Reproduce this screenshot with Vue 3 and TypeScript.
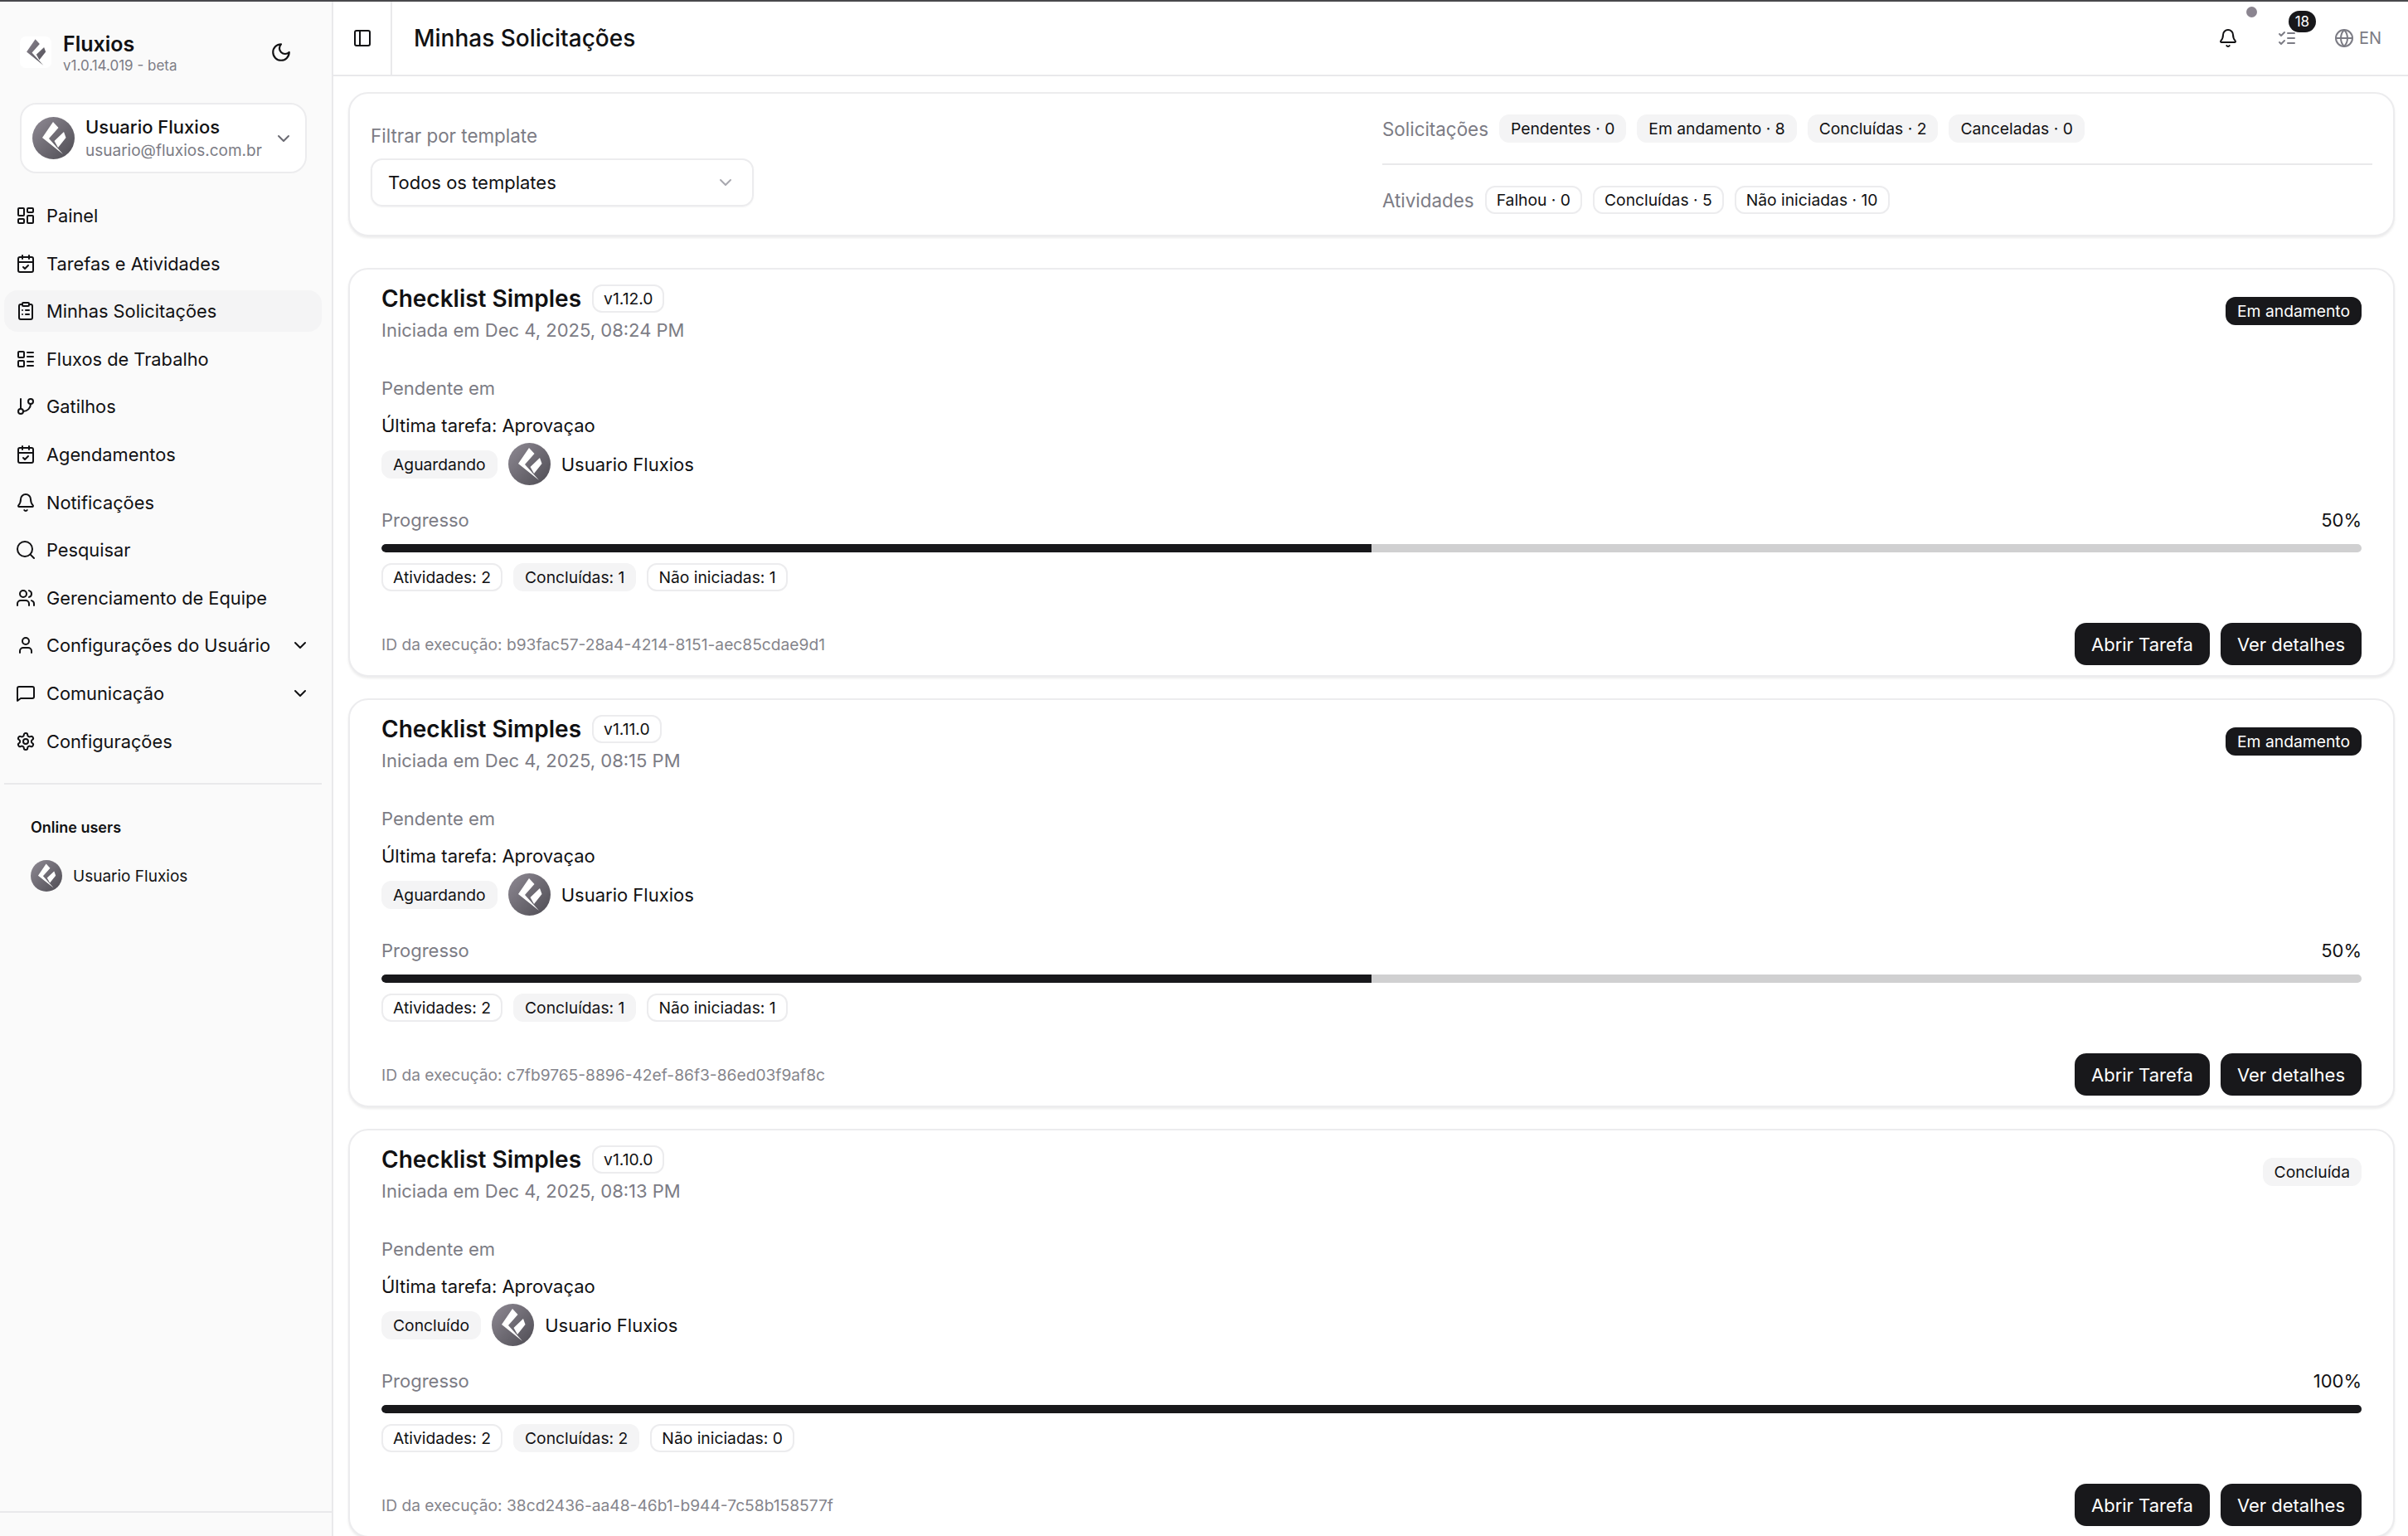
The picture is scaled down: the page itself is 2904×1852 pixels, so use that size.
<script setup lang="ts">
import { computed } from "vue";

// lucide-like icons, all on a 24 box
const icons: Record<string, string[]> = {
  dashboard: [
    "M4 3h5a1 1 0 0 1 1 1v7a1 1 0 0 1-1 1H4a1 1 0 0 1-1-1V4a1 1 0 0 1 1-1z",
    "M15 3h5a1 1 0 0 1 1 1v3a1 1 0 0 1-1 1h-5a1 1 0 0 1-1-1V4a1 1 0 0 1 1-1z",
    "M15 12h5a1 1 0 0 1 1 1v7a1 1 0 0 1-1 1h-5a1 1 0 0 1-1-1v-7a1 1 0 0 1 1-1z",
    "M4 16h5a1 1 0 0 1 1 1v3a1 1 0 0 1-1 1H4a1 1 0 0 1-1-1v-3a1 1 0 0 1 1-1z",
  ],
  calendar: [
    "M8 2v4",
    "M16 2v4",
    "M3 10h18",
    "M5 4h14a2 2 0 0 1 2 2v14a2 2 0 0 1-2 2H5a2 2 0 0 1-2-2V6a2 2 0 0 1 2-2z",
    "m9 16 2 2 4-4",
  ],
  clipboard: [
    "M9 2h6a1 1 0 0 1 1 1v2a1 1 0 0 1-1 1H9a1 1 0 0 1-1-1V3a1 1 0 0 1 1-1z",
    "M16 4h2a2 2 0 0 1 2 2v14a2 2 0 0 1-2 2H6a2 2 0 0 1-2-2V6a2 2 0 0 1 2-2h2",
    "M12 11h4",
    "M12 16h4",
    "M8 11h.01",
    "M8 16h.01",
  ],
  flows: [
    "M4 3h5a1 1 0 0 1 1 1v5a1 1 0 0 1-1 1H4a1 1 0 0 1-1-1V4a1 1 0 0 1 1-1z",
    "M4 14h5a1 1 0 0 1 1 1v5a1 1 0 0 1-1 1H4a1 1 0 0 1-1-1v-5a1 1 0 0 1 1-1z",
    "M14 4h7",
    "M14 9h7",
    "M14 15h7",
    "M14 20h7",
  ],
  branch: [
    "M6 3v12",
    "M15 6a3 3 0 1 0 6 0a3 3 0 1 0-6 0",
    "M3 18a3 3 0 1 0 6 0a3 3 0 1 0-6 0",
    "M18 9a9 9 0 0 1-9 9",
  ],
  bell: [
    "M10.268 21a2 2 0 0 0 3.464 0",
    "M3.262 15.326A1 1 0 0 0 4 17h16a1 1 0 0 0 .74-1.673C19.41 13.956 18 12.499 18 8A6 6 0 0 0 6 8c0 4.499-1.411 5.956-2.738 7.326",
  ],
  search: ["M2 11a9 9 0 1 0 18 0a9 9 0 1 0-18 0", "m22 22-4.6-4.6"],
  users: [
    "M16 21v-2a4 4 0 0 0-4-4H6a4 4 0 0 0-4 4v2",
    "M5 7a4 4 0 1 0 8 0a4 4 0 1 0-8 0",
    "M22 21v-2a4 4 0 0 0-3-3.87",
    "M16 3.13a4 4 0 0 1 0 7.75",
  ],
  user: ["M19 21v-2a4 4 0 0 0-4-4H9a4 4 0 0 0-4 4v2", "M8 7a4 4 0 1 0 8 0a4 4 0 1 0-8 0"],
  message: ["M22 16a2 2 0 0 1-2 2H6l-4 3V6a2 2 0 0 1 2-2h16a2 2 0 0 1 2 2z"],
  settings: [
    "M12.22 2h-.44a2 2 0 0 0-2 2v.18a2 2 0 0 1-1 1.73l-.43.25a2 2 0 0 1-2 0l-.15-.08a2 2 0 0 0-2.73.73l-.22.38a2 2 0 0 0 .73 2.73l.15.1a2 2 0 0 1 1 1.72v.51a2 2 0 0 1-1 1.74l-.15.09a2 2 0 0 0-.73 2.73l.22.38a2 2 0 0 0 2.73.73l.15-.08a2 2 0 0 1 2 0l.43.25a2 2 0 0 1 1 1.73V20a2 2 0 0 0 2 2h.44a2 2 0 0 0 2-2v-.18a2 2 0 0 1 1-1.73l.43-.25a2 2 0 0 1 2 0l.15.08a2 2 0 0 0 2.73-.73l.22-.39a2 2 0 0 0-.73-2.73l-.15-.08a2 2 0 0 1-1-1.74v-.5a2 2 0 0 1 1-1.74l.15-.09a2 2 0 0 0 .73-2.73l-.22-.38a2 2 0 0 0-2.73-.73l-.15.08a2 2 0 0 1-2 0l-.43-.25a2 2 0 0 1-1-1.73V4a2 2 0 0 0-2-2z",
    "M9 12a3 3 0 1 0 6 0a3 3 0 1 0-6 0",
  ],
  moon: ["M12 3a6 6 0 0 0 9 9 9 9 0 1 1-9-9Z"],
  chevron: ["m6 9 6 6 6-6"],
  panel: ["M5 3h14a2 2 0 0 1 2 2v14a2 2 0 0 1-2 2H5a2 2 0 0 1-2-2V5a2 2 0 0 1 2-2z", "M9 3v18"],
  checks: ["m3 17 2 2 4-4", "m3 7 2 2 4-4", "M13 6h8", "M13 12h8", "M13 18h8"],
  globe: [
    "M2 12a10 10 0 1 0 20 0a10 10 0 1 0-20 0",
    "M12 2a14.5 14.5 0 0 0 0 20 14.5 14.5 0 0 0 0-20",
    "M2 12h20",
  ],
};

const logo = "M25 6 31.5 13 20 26 37 45 12 25z M38 18 40.5 25 31 37 26.5 29z";

const nav = [
  { label: "Painel", icon: "dashboard" },
  { label: "Tarefas e Atividades", icon: "calendar" },
  { label: "Minhas Solicitações", icon: "clipboard", active: true },
  { label: "Fluxos de Trabalho", icon: "flows" },
  { label: "Gatilhos", icon: "branch" },
  { label: "Agendamentos", icon: "calendar" },
  { label: "Notificações", icon: "bell" },
  { label: "Pesquisar", icon: "search" },
  { label: "Gerenciamento de Equipe", icon: "users" },
  { label: "Configurações do Usuário", icon: "user", more: true },
  { label: "Comunicação", icon: "message", more: true },
  { label: "Configurações", icon: "settings" },
];

const requestStats = ["Pendentes · 0", "Em andamento · 8", "Concluídas · 2", "Canceladas · 0"];
const activityStats = ["Falhou · 0", "Concluídas · 5", "Não iniciadas · 10"];

interface Run {
  version: string;
  started: string;
  status: string;
  running: boolean;
  waiting: string;
  progress: number;
  done: number;
  todo: number;
  id: string;
}

const runs: Run[] = [
  {
    version: "v1.12.0",
    started: "Dec 4, 2025, 08:24 PM",
    status: "Em andamento",
    running: true,
    waiting: "Aguardando",
    progress: 50,
    done: 1,
    todo: 1,
    id: "b93fac57-28a4-4214-8151-aec85cdae9d1",
  },
  {
    version: "v1.11.0",
    started: "Dec 4, 2025, 08:15 PM",
    status: "Em andamento",
    running: true,
    waiting: "Aguardando",
    progress: 50,
    done: 1,
    todo: 1,
    id: "c7fb9765-8896-42ef-86f3-86ed03f9af8c",
  },
  {
    version: "v1.10.0",
    started: "Dec 4, 2025, 08:13 PM",
    status: "Concluída",
    running: false,
    waiting: "Concluído",
    progress: 100,
    done: 2,
    todo: 0,
    id: "38cd2436-aa48-46b1-b944-7c58b158577f",
  },
];

const pageTitle = computed(() => nav.find((n) => n.active)?.label ?? "");
</script>

<template>
  <div class="shell">
    <aside class="sidebar">
      <div class="brand">
        <span class="brand-logo">
          <svg viewBox="2 2 47 47" class="brand-mark">
            <defs>
              <linearGradient id="mark" x1="0" y1="0" x2="1" y2="1">
                <stop offset="0" stop-color="#8b8590" />
                <stop offset="1" stop-color="#4f4d54" />
              </linearGradient>
            </defs>
            <path :d="logo" fill="url(#mark)" />
          </svg>
        </span>
        <div class="brand-text">
          <strong>Fluxios</strong>
          <small>v1.0.14.019 - beta</small>
        </div>
        <svg class="ico moon" viewBox="0 0 24 24"><path v-for="d in icons.moon" :key="d" :d="d" /></svg>
      </div>

      <div class="account">
        <span class="avatar">
          <svg viewBox="0 0 51 51"><path :d="logo" fill="#fff" /></svg>
        </span>
        <div class="account-text">
          <span>Usuario Fluxios</span>
          <small>usuario@fluxios.com.br</small>
        </div>
        <svg class="ico account-chevron" viewBox="0 0 24 24"><path v-for="d in icons.chevron" :key="d" :d="d" /></svg>
      </div>

      <nav class="nav">
        <a v-for="item in nav" :key="item.label" class="nav-item" :class="{ active: item.active }">
          <svg class="ico" viewBox="0 0 24 24"><path v-for="d in icons[item.icon]" :key="d" :d="d" /></svg>
          <span class="nav-label">{{ item.label }}</span>
          <svg v-if="item.more" class="ico nav-more" viewBox="0 0 24 24"><path v-for="d in icons.chevron" :key="d" :d="d" /></svg>
        </a>
      </nav>

      <div class="online">
        <h4>Online users</h4>
        <div class="online-user">
          <span class="avatar small">
            <svg viewBox="0 0 51 51"><path :d="logo" fill="#fff" /></svg>
          </span>
          <span>Usuario Fluxios</span>
        </div>
      </div>
      <div class="sidebar-foot"></div>
    </aside>

    <div class="main">
      <header class="topbar">
        <div class="toggle">
          <svg class="ico" viewBox="0 0 24 24"><path v-for="d in icons.panel" :key="d" :d="d" /></svg>
        </div>
        <h1>{{ pageTitle }}</h1>
        <div class="top-actions">
          <span class="top-btn">
            <svg class="ico" viewBox="0 0 24 24"><path v-for="d in icons.bell" :key="d" :d="d" /></svg>
            <i class="dot"></i>
          </span>
          <span class="top-btn">
            <svg class="ico muted" viewBox="0 0 24 24"><path v-for="d in icons.checks" :key="d" :d="d" /></svg>
            <i class="count">18</i>
          </span>
          <span class="lang">
            <svg class="ico" viewBox="0 0 24 24"><path v-for="d in icons.globe" :key="d" :d="d" /></svg>
            EN
          </span>
        </div>
      </header>

      <main class="content">
        <section class="card filters">
          <div class="filter-col">
            <label>Filtrar por template</label>
            <div class="select">
              <span>Todos os templates</span>
              <svg class="ico" viewBox="0 0 24 24"><path v-for="d in icons.chevron" :key="d" :d="d" /></svg>
            </div>
          </div>
          <div class="stats">
            <div class="stat-row first">
              <span class="stat-label">Solicitações</span>
              <span v-for="s in requestStats" :key="s" class="chip soft">{{ s }}</span>
            </div>
            <div class="stat-row">
              <span class="stat-label">Atividades</span>
              <span v-for="s in activityStats" :key="s" class="chip">{{ s }}</span>
            </div>
          </div>
        </section>

        <article v-for="run in runs" :key="run.id" class="card run">
          <div class="run-head">
            <div>
              <div class="run-title">
                <h2>Checklist Simples</h2>
                <span class="chip version">{{ run.version }}</span>
              </div>
              <p class="run-date">Iniciada em {{ run.started }}</p>
            </div>
            <span class="chip" :class="run.running ? 'dark' : 'soft'">{{ run.status }}</span>
          </div>

          <p class="muted-label pending">Pendente em</p>
          <p class="last-task">Última tarefa: Aprovaçao</p>
          <div class="assignee">
            <span class="chip soft">{{ run.waiting }}</span>
            <span class="avatar">
              <svg viewBox="0 0 51 51"><path :d="logo" fill="#fff" /></svg>
            </span>
            <span class="assignee-name">Usuario Fluxios</span>
          </div>

          <div class="progress-head">
            <span class="muted-label">Progresso</span>
            <span>{{ run.progress }}%</span>
          </div>
          <div class="bar">
            <div class="bar-fill" :style="{ width: run.progress + '%' }"></div>
          </div>
          <div class="counts">
            <span class="chip">Atividades: 2</span>
            <span class="chip soft">Concluídas: {{ run.done }}</span>
            <span class="chip">Não iniciadas: {{ run.todo }}</span>
          </div>

          <div class="run-foot">
            <span class="run-id">ID da execução: {{ run.id }}</span>
            <div class="run-actions">
              <button>Abrir Tarefa</button>
              <button>Ver detalhes</button>
            </div>
          </div>
        </article>
      </main>
    </div>
  </div>
</template>

<style>
html,
body {
  margin: 0;
  background: #fff;
}
</style>

<style scoped>
* {
  box-sizing: border-box;
}

.shell {
  display: flex;
  height: 1852px;
  overflow: hidden;
  border-top: 2px solid #48484c;
  font-family: Inter, "Liberation Sans", sans-serif;
  font-size: 22px;
  color: #111113;
  background: #fff;
}

.ico {
  width: 24px;
  height: 24px;
  flex: none;
  fill: none;
  stroke: currentColor;
  stroke-width: 2;
  stroke-linecap: round;
  stroke-linejoin: round;
}

/* sidebar */
.sidebar {
  width: 402px;
  flex: none;
  display: flex;
  flex-direction: column;
  background: #fafafa;
  border-right: 2px solid #e9e9eb;
}

.brand {
  display: flex;
  align-items: center;
  height: 38px;
  margin: 42px 0 0 24px;
}

.brand-logo {
  width: 38px;
  height: 38px;
  background: #fff;
  border-radius: 7px;
  display: flex;
  align-items: center;
  justify-content: center;
}

.brand-mark {
  width: 38px;
  height: 38px;
}

.brand-text {
  display: flex;
  flex-direction: column;
  margin-left: 14px;
  flex: 1;
  padding-top: 1px;
}

.brand-text strong {
  font-size: 25px;
  font-weight: 600;
  line-height: 30px;
}

.brand-text small {
  font-size: 17px;
  line-height: 22px;
  color: #7c7c85;
}

.moon {
  margin-right: 48px;
  width: 26px;
  height: 26px;
}

.account {
  display: flex;
  align-items: center;
  margin: 42px 30px 0 24px;
  height: 85px;
  padding: 0 14px 0 13px;
  background: #fff;
  border: 2px solid #ececee;
  border-radius: 20px;
}

.avatar {
  width: 51px;
  height: 51px;
  flex: none;
  border-radius: 50%;
  background: linear-gradient(135deg, #8f8a94, #4e4c53);
  display: flex;
  align-items: center;
  justify-content: center;
}

.avatar svg {
  width: 100%;
  height: 100%;
}

.avatar.small {
  width: 38px;
  height: 38px;
}

.account-text {
  display: flex;
  flex-direction: column;
  margin-left: 13px;
  flex: 1;
  line-height: 30px;
}

.account-text span {
  font-weight: 500;
}

.account-text small {
  font-size: 19px;
  color: #7c7c85;
  line-height: 28px;
}

.account-chevron {
  color: #6b6b73;
}

.nav {
  display: flex;
  flex-direction: column;
  margin: 26px 12px 0 5px;
}

.nav-item {
  display: flex;
  align-items: center;
  height: 50px;
  margin-bottom: 7.6px;
  padding: 0 14px;
  gap: 13px;
  border-radius: 16px;
  font-size: 21.8px;
  white-space: nowrap;
}

.nav-item.active {
  background: #f4f4f5;
}

.nav-label {
  flex: 1;
}

.online {
  margin: 18px 12px 0 5px;
  padding: 40px 0 0 32px;
  border-top: 2px solid #e9e9eb;
}

.online h4 {
  margin: 0;
  font-size: 18px;
  font-weight: 600;
  line-height: 24px;
}

.online-user {
  display: flex;
  align-items: center;
  gap: 13px;
  margin-top: 27px;
  font-size: 19px;
}

.sidebar-foot {
  margin-top: auto;
  height: 30px;
  border-top: 2px solid #e9e9eb;
}

/* top bar */
.main {
  flex: 1;
  min-width: 0;
  display: flex;
  flex-direction: column;
}

.topbar {
  display: flex;
  align-items: center;
  height: 90px;
  flex: none;
  border-bottom: 2px solid #e9e9eb;
}

.toggle {
  width: 71px;
  height: 100%;
  display: flex;
  align-items: center;
  justify-content: center;
  border-right: 2px solid #e9e9eb;
}

.topbar h1 {
  margin: 0 0 0 26px;
  font-size: 28px;
  font-weight: 500;
  flex: 1;
}

.top-actions {
  display: flex;
  align-items: center;
  gap: 47px;
  padding-right: 32px;
}

.top-btn {
  position: relative;
  display: flex;
}

.muted {
  color: #7c7c85;
}

.dot {
  position: absolute;
  top: -26px;
  right: -23px;
  width: 13px;
  height: 13px;
  border-radius: 50%;
  background: #8b8590;
}

.count {
  position: absolute;
  top: -21px;
  left: 14px;
  width: 33px;
  height: 26px;
  border-radius: 13px;
  background: #18181b;
  color: #fff;
  font-size: 17px;
  font-style: normal;
  line-height: 26px;
  text-align: center;
}

.lang {
  display: flex;
  align-items: center;
  gap: 6px;
  margin-left: -2px;
  font-size: 20px;
  color: #7c7c85;
}

/* content */
.content {
  flex: 1;
  min-height: 0;
  overflow: hidden;
  display: flex;
  flex-direction: column;
  gap: 26px;
  padding: 19px 16px 0 18px;
}

.card {
  flex: none;
  background: #fff;
  border: 2px solid #ececee;
  border-radius: 24px;
  box-shadow: 0 2px 3px rgba(0, 0, 0, 0.08);
}

.filters {
  display: grid;
  grid-template-columns: 1fr 1fr;
  column-gap: 26px;
  height: 174px;
  padding: 24px 25px 0 25px;
  margin-bottom: 12px;
}

.filter-col label {
  display: block;
  margin-top: 12px;
  font-size: 22.4px;
  color: #7c7c85;
  line-height: 30px;
}

.select {
  display: flex;
  align-items: center;
  justify-content: space-between;
  width: 462px;
  height: 58px;
  margin-top: 12px;
  padding: 0 20px 0 19px;
  border: 2px solid #ececee;
  border-radius: 14px;
  box-shadow: 0 1px 2px rgba(0, 0, 0, 0.05);
}

.select .ico {
  color: #a8a8af;
}

.stats {
  display: flex;
  flex-direction: column;
}

.stat-row {
  display: flex;
  align-items: center;
  gap: 13px;
  height: 34px;
}

.stat-row.first {
  margin-top: 1px;
  margin-bottom: 52px;
  position: relative;
}

.stat-row.first::after {
  content: "";
  position: absolute;
  left: 0;
  right: 0;
  top: 59px;
  height: 2px;
  background: #e9e9eb;
}

.stat-label {
  font-size: 22.4px;
  color: #7c7c85;
}

.chip {
  display: inline-flex;
  align-items: center;
  height: 34px;
  padding: 0 12px;
  border: 2px solid #ececee;
  border-radius: 12px;
  font-size: 19.3px;
  white-space: nowrap;
}

.chip.soft {
  background: #f4f4f5;
  border-color: #f4f4f5;
}

.chip.dark {
  background: #18181b;
  border-color: #18181b;
  color: #fff;
}

/* run card */
.run {
  height: 493px;
  padding: 16px 38px 0;
}

.run-head {
  display: flex;
  justify-content: space-between;
  align-items: flex-start;
}

.run-head > .chip {
  margin-top: 17px;
}

.run-title {
  display: flex;
  align-items: center;
  gap: 13px;
  height: 38px;
}

.run-title h2 {
  margin: 0;
  font-size: 28px;
  font-weight: 600;
}

.run-date {
  margin: 1px 0 0;
  line-height: 36px;
  color: #7c7c85;
}

.muted-label {
  color: #7c7c85;
}

.pending {
  margin: 37px 0 0;
  line-height: 30px;
}

.last-task {
  margin: 15px 0 0;
  line-height: 30px;
}

.assignee {
  display: flex;
  align-items: center;
  gap: 13px;
  margin-top: 6px;
  height: 51px;
}

.progress-head {
  display: flex;
  justify-content: space-between;
  margin-top: 27px;
  line-height: 30px;
}

.bar {
  height: 10px;
  margin-top: 14px;
  border-radius: 5px;
  background: #d0d0d1;
  overflow: hidden;
}

.bar-fill {
  height: 100%;
  background: #18181b;
  border-radius: 5px 0 0 5px;
}

.counts {
  display: flex;
  gap: 13px;
  margin-top: 13px;
}

.run-foot {
  display: flex;
  justify-content: space-between;
  align-items: center;
  margin-top: 38px;
}

.run-id {
  font-size: 19.2px;
  color: #85858c;
}

.run-actions {
  display: flex;
  gap: 13px;
}

.run-actions button {
  height: 51px;
  padding: 0 20px;
  border: none;
  border-radius: 14px;
  background: #18181b;
  color: #fff;
  font: inherit;
}
</style>
